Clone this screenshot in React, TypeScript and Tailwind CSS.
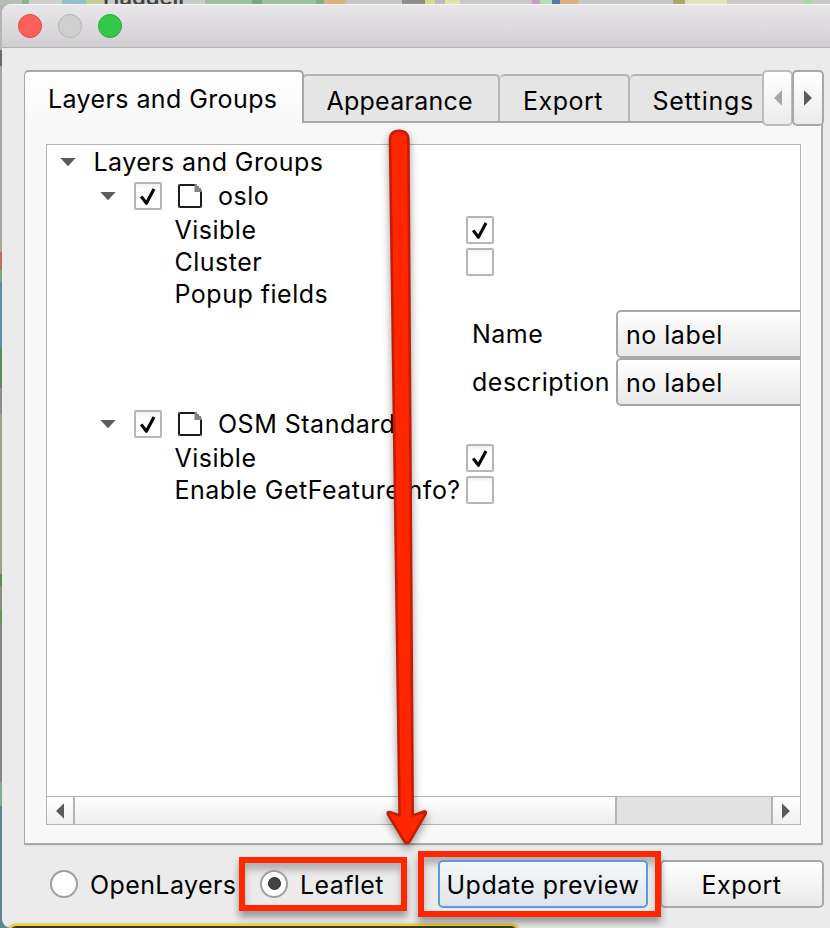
import type { ReactNode } from 'react';

const Tri = ({ dir, color = '#5c5c5c' }: { dir: 'left' | 'right' | 'down'; color?: string }) => {
  if (dir === 'down')
    return (
      <svg width="16" height="9" viewBox="0 0 16 9" className="block shrink-0">
        <path d="M0.3 0H15.7L8 8.3Z" fill={color} />
      </svg>
    );
  return (
    <svg width="8" height="16" viewBox="0 0 8 16" className="block shrink-0">
      <path d={dir === 'left' ? 'M8 0.2V15.8L0 8Z' : 'M0 0.2V15.8L8 8Z'} fill={color} />
    </svg>
  );
};

const Check = ({ on }: { on?: boolean }) => (
  <div className="flex h-7 w-7 shrink-0 items-center justify-center rounded-[2px] border-2 border-[#b6b6b6] bg-linear-to-b from-[#f1f1f1] to-white to-20%">
    {on && (
      <svg width="24" height="24" viewBox="0 0 24 24" fill="none" className="block">
        <path d="M5.2 12.4L10.400 19.300L18 5" stroke="#050505" strokeWidth="3.100" strokeLinejoin="round" />
      </svg>
    )}
  </div>
);

const Doc = () => (
  <svg width="26" height="26" viewBox="0 0 26 26" className="block shrink-0">
    <path d="M2 2H18L24 8V24H2Z" fill="#fff" stroke="#1c1c1c" strokeWidth="2" />
    <path d="M17.5 1H20V3H22V5H24V7H25V9H17.5Z" fill="#858585" />
    <path d="M1 1h1.6v1.6H1zM1 23.4h1.6V25H1zM23.4 23.4H25V25h-1.6z" fill="#888" />
  </svg>
);

const Row = ({ h, children }: { h: string; children: ReactNode }) => <div className={`flex shrink-0 items-center ${h}`}>{children}</div>;

const PropRow = ({ h, label, box }: { h: string; label: string; box?: ReactNode }) => (
  <Row h={h}>
    <div className="w-[419px] shrink-0 pl-[127.5px]">{label}</div>
    {box}
  </Row>
);

const LayerRow = ({ h, label }: { h: string; label: string }) => (
  <Row h={h}>
    <div className="ml-[53px] w-[34px] shrink-0">
      <Tri dir="down" />
    </div>
    <Check on />
    <div className="mr-[15px] ml-[15px]">
      <Doc />
    </div>
    {label}
  </Row>
);

const Combo = ({ label }: { label: string }) => (
  <Row h="h-12">
    <div className="w-[569px] shrink-0 pl-[425px]">{label}</div>
    <div className="flex h-12 w-[240px] shrink-0 items-center rounded-[5px] border-2 border-[#a8a8a8] bg-linear-to-b from-white to-[#e9e9e9] pt-[2px] pl-2">no label</div>
  </Row>
);

const mapStrip = [
  ['w-[22px]', 'bg-[#b9bdb8]'], ['w-[7px]', 'bg-[#8fb58c]'], ['w-[33px]', 'bg-[#cfcfcb]'], ['w-[24px]', 'bg-[#93bfd0]'],
  ['w-[18px]', 'bg-[#c6cb9d]'], ['w-[101px]', 'bg-[#c9cbc9]'], ['w-[47px]', 'bg-[#9fbfa5]'], ['w-[10px]', 'bg-[#77a983]'],
  ['w-[54px]', 'bg-[#9fbfa5]'], ['w-[8px]', 'bg-[#7fb387]'], ['w-[22px]', 'bg-[#d9b487]'], ['w-[56px]', 'bg-[#c6c6c4]'],
  ['w-[23px]', 'bg-[#8d8d8d]'], ['w-[10px]', 'bg-[#d8d78c]'], ['w-[10px]', 'bg-[#bcbcc0]'], ['w-[15px]', 'bg-[#e2e1ad]'],
  ['w-[72px]', 'bg-[#c9c9ca]'], ['w-[8px]', 'bg-[#c8a0c4]'], ['w-[12px]', 'bg-[#b4dfb9]'], ['w-[8px]', 'bg-[#5578b8]'],
  ['w-[18px]', 'bg-[#dfb17d]'], ['w-[95px]', 'bg-[#c5c8c5]'], ['w-[12px]', 'bg-[#aaa86d]'], ['w-[42px]', 'bg-[#e3e3c4]'],
  ['w-[76px]', 'bg-[#cbcac8]'], ['w-[10px]', 'bg-[#a9d6ae]'], ['w-[17px]', 'bg-[#c7c8c7]'],
];

const sideStrip = [
  ['h-[46px]', 'bg-[#b4b6b3]'], ['h-[16px]', 'bg-[#6c6c6c]'], ['h-[186px]', 'bg-[#a3a69f]'], ['h-[18px]', 'bg-[#b9705e]'],
  ['h-[12px]', 'bg-[#84a57c]'], ['h-[66px]', 'bg-[#5f8ca0]'], ['h-[40px]', 'bg-[#5d8b5b]'], ['h-[26px]', 'bg-[#8c8c8c]'],
  ['h-[160px]', 'bg-[#a0a088]'], ['h-[12px]', 'bg-[#5f8b50]'], ['h-[24px]', 'bg-[#8e8b80]'], ['h-[16px]', 'bg-[#66935f]'],
  ['h-[156px]', 'bg-[#858587]'], ['h-[24px]', 'bg-[#84ab92]'], ['h-[122px]', 'bg-[#5f8591]'],
];

export default function App() {
  return (
    <div className="relative flex h-[928px] w-[830px] flex-col overflow-hidden bg-[#5f8591] font-['Inter',sans-serif] text-[25px] leading-[30px] tracking-[0.5px] whitespace-nowrap text-black">
      {/* Map peeking out from behind the window */}
      <div className="flex h-1 shrink-0 overflow-hidden">
        {mapStrip.map(([w, c], i) => (
          <div key={i} className={`h-full shrink-0 ${w} ${c}`} />
        ))}
      </div>
      <div className="absolute top-0 left-[103px] h-1 w-[90px] overflow-hidden">
        <div className="-mt-[15px] text-[22px] leading-6 font-semibold tracking-normal text-[#444]">Haggell</div>
      </div>
      <div className="absolute top-1 left-0 flex w-3 flex-col">
        {sideStrip.map(([h, c], i) => (
          <div key={i} className={`${h} ${c}`} />
        ))}
      </div>

      {/* Window */}
      <div className="relative ml-[2px] flex h-[924px] shrink-0 flex-col overflow-hidden rounded-l-[9px] bg-[#ebebeb]">
        <div className="flex h-11 shrink-0 items-center gap-4 border-t border-b border-t-[#f4f3f4] border-b-[#b1aeb1] bg-linear-to-b from-[#e9e7e9] to-[#d1ced1] pl-4">
          <div className="h-6 w-6 rounded-full border border-[#e2463f] bg-[#fc605c]" />
          <div className="h-6 w-6 rounded-full border border-[#b3b2b3] bg-[#d0cfd0]" />
          <div className="h-6 w-6 rounded-full border border-[#27a934] bg-[#34c84a]" />
        </div>

        {/* Tabs */}
        <div className="z-10 mt-[22px] ml-[22px] flex h-[53px] shrink-0 items-start">
          <div className="h-[53px] w-[280px] rounded-t-[5px] border-t-2 border-r-2 border-l border-[#a8a8a8] bg-linear-to-b from-white to-[#f8f8f8] pt-[12px] pl-[23px] tracking-[0.4px]">Layers and Groups</div>
          <div className="mt-1 flex h-[49px] w-[459px] overflow-hidden border-b-2 border-[#a8a8a8] bg-[#e5e5e5]">
            <div className="-ml-[2px] w-[198px] shrink-0 rounded-t-[5px] border-2 border-b-0 border-[#b6b6b6] pt-[10px] pl-[22.5px] tracking-[0.25px]">Appearance</div>
            <div className="w-[130px] shrink-0 rounded-t-[5px] border-2 border-b-0 border-l-0 border-[#b6b6b6] pt-[10px] pl-[23px]">Export</div>
            <div className="w-[150px] shrink-0 rounded-t-[5px] border-2 border-b-0 border-l-0 border-[#b6b6b6] pt-[10px] pl-[22.5px] tracking-[0.7px]">Settings</div>
          </div>
          <div className="-ml-[1px] flex h-14 shrink-0">
            <div className="flex h-14 w-[31px] items-center justify-center rounded-[5px] border-2 border-[#bcbcbc] bg-linear-to-b from-white to-[#ececec]">
              <Tri dir="left" color="#a6a6a6" />
            </div>
            <div className="-ml-px flex h-14 w-8 items-center justify-center rounded-[5px] border-2 border-[#a8a8a8] bg-linear-to-b from-white to-[#ececec]">
              <Tri dir="right" />
            </div>
          </div>
        </div>

        {/* Tab page */}
        <div className="ml-[22px] flex h-[722px] w-[799px] shrink-0 flex-col border-r-2 border-b-2 border-l border-[#a8a8a8] bg-[#f8f8f8] pt-[21px] pl-[21px] shadow-[0_2px_0_-1px_#dedede]">
          <div className="flex h-[681px] w-[755px] flex-col overflow-hidden border border-[#b4b4b4] bg-white">
            <div className="flex h-[651px] shrink-0 flex-col overflow-hidden">
              <Row h="h-[34px]">
                <div className="mr-[18px] ml-[13px]">
                  <Tri dir="down" />
                </div>
                <span className="-ml-[0.5px] tracking-[0.42px]">Layers and Groups</span>
              </Row>
              <LayerRow h="h-[34px]" label="oslo" />
              <PropRow h="h-[33px]" label="Visible" box={<Check on />} />
              <PropRow h="h-8" label="Cluster" box={<Check />} />
              <PropRow h="h-8" label="Popup fields" />
              <Combo label="Name" />
              <Combo label="description" />
              <LayerRow h="h-[36px]" label="OSM Standard" />
              <PropRow h="h-8" label="Visible" box={<Check on />} />
              <PropRow h="h-8" label="Enable GetFeatureInfo?" box={<Check />} />
            </div>
            {/* Horizontal scroll bar */}
            <div className="flex h-[28px] shrink-0 border-t border-[#b4b4b4] bg-[#e2e2e2]">
              <div className="flex w-[28px] items-center border-r-2 border-[#b4b4b4] bg-linear-to-b from-white to-[#f0f0f0] pl-[9px]">
                <Tri dir="left" />
              </div>
              <div className="w-[542px] border-r-2 border-[#b4b4b4] bg-linear-to-b from-white to-[#ededed]" />
              <div className="w-[154px] bg-[#e2e2e2]" />
              <div className="flex flex-1 items-center border-l-2 border-[#b4b4b4] bg-linear-to-b from-white to-[#f0f0f0] pl-[9px]">
                <Tri dir="right" />
              </div>
            </div>
          </div>
        </div>

        {/* Footer */}
        <div className="mt-[6px] flex h-[66px] shrink-0 items-center pl-12">
          <div className="h-7 w-7 shrink-0 rounded-full border-2 border-[#a0a0a0] bg-white" />
          <span className="ml-[12px] w-[149px] pt-px tracking-[0.4px]">OpenLayers</span>
          <div className="-mt-px flex h-[54px] w-[168px] shrink-0 items-center border-6 border-[#ff2600] pl-[15px] shadow-[0_6px_7px_rgba(0,0,0,0.35),inset_0_7px_7px_rgba(0,0,0,0.25)]">
            <div className="flex h-7 w-7 shrink-0 items-center justify-center rounded-full border-2 border-[#a0a0a0] bg-white">
              <div className="h-[13px] w-[13px] rounded-full border border-[#2a2a2a] bg-[#444]" />
            </div>
            <span className="ml-3 pt-[3px] tracking-[0.4px]">Leaflet</span>
          </div>
          <div className="z-10 -mt-px ml-[11px] flex h-[66px] w-[243px] shrink-0 items-center border-6 border-[#ff2600] pl-[14px] shadow-[0_6px_7px_rgba(0,0,0,0.35)]">
            <div className="flex h-12 w-[210px] items-center rounded-[5px] border-2 border-[#5a9be3] bg-linear-to-b from-[#f5f7fa] to-[#e0e5ec] pt-[2px] pl-[6.5px] tracking-[0.5px]">Update preview</div>
          </div>
          <div className="-ml-[1px] flex h-12 w-[164px] shrink-0 items-center rounded-[5px] border-2 border-[#a8a8a8] bg-linear-to-b from-white to-[#e9e9e9] pt-[2px] pl-[39.5px] tracking-[0.5px]">Export</div>
        </div>
      </div>

      {/* Inner shadow cast by the highlight frame over the button */}
      <div className="absolute top-[857px] left-[424px] h-[54px] w-[232px] shadow-[inset_0_7px_7px_rgba(0,0,0,0.25)]" />

      {/* Yellow highlighted edge under the window */}
      <div className="absolute top-[924px] left-[8px] h-3 w-[511px] rounded-t-[8px] border-2 border-[#f2d21d] bg-[#3b3928] shadow-[0_0_3px_rgba(120,100,0,0.5)]" />

      {/* Red arrow pointing at the update button */}
      <svg width="60" height="740" viewBox="375 120 60 740" className="absolute top-[120px] left-[375px] drop-shadow-[0_4px_4px_rgba(0,0,0,0.4)]">
        <path
          d="M390 140Q390 130.7 399 130.7Q408.300 130.7 408.400 140L412.700 815.500L424 811.500Q426.500 811 425.500 814L409.500 841.500Q407 845 404.500 841.500L388 814.500Q387 811.500 389.700 812L399.600 815.500Z"
          fill="#ff2600"
          stroke="#c41c06"
          strokeWidth="2.600"
          strokeLinejoin="round"
        />
      </svg>
    </div>
  );
}
